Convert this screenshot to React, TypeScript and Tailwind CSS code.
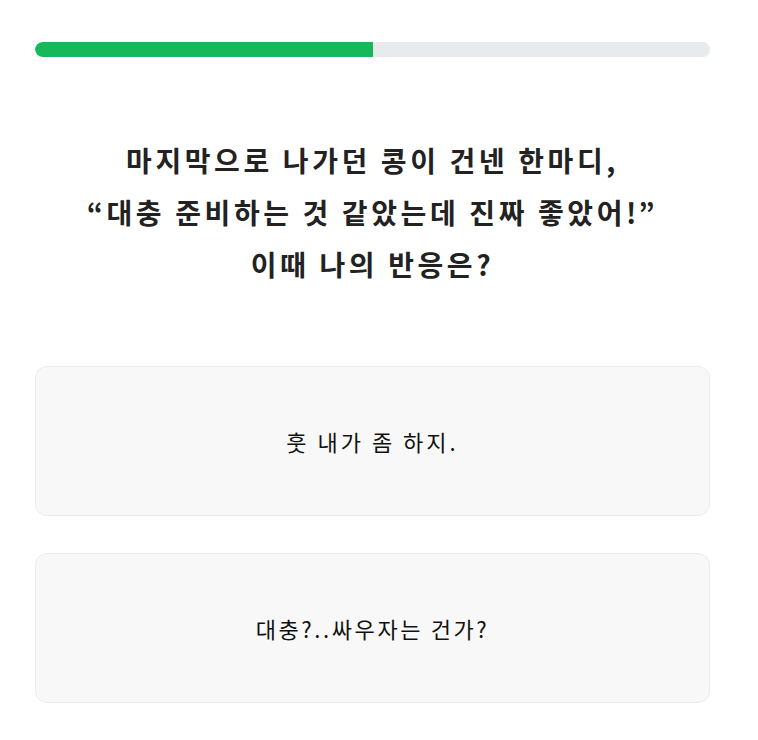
export default function App() {
  const font = { fontFamily: '"Noto Sans CJK KR", "Noto Sans", sans-serif' };
  return (
    <div className="min-h-[740px] bg-white" style={font}>
      <div className="ml-[35px] w-[675px] pt-[42px]">
        <div className="h-[15px] w-full rounded-full bg-[#e8ebee] overflow-hidden">
          <div className="h-full w-1/2 bg-[#16b85a] rounded-l-full" />
        </div>
        <h1 className="mt-[77px] text-center text-[28px] leading-[52px] font-bold text-[#222222] tracking-[3.6px]">
          마지막으로 나가던 콩이 건넨 한마디,
          <br />
          “대충 준비하는 것 같았는데 진짜 좋았어!”
          <br />
          이때 나의 반응은?
        </h1>
        <div className="mt-[76px] flex flex-col gap-[37px]">
          <div className="h-[150px] rounded-xl border border-[#ececec] bg-[#f8f8f8] flex items-center justify-center text-[22px] tracking-[3px] text-[#111111]">
            훗 내가 좀 하지.
          </div>
          <div className="h-[150px] rounded-xl border border-[#ececec] bg-[#f8f8f8] flex items-center justify-center text-[22px] tracking-[2.6px] text-[#111111]">
            대충?..싸우자는 건가?
          </div>
        </div>
      </div>
    </div>
  );
}
